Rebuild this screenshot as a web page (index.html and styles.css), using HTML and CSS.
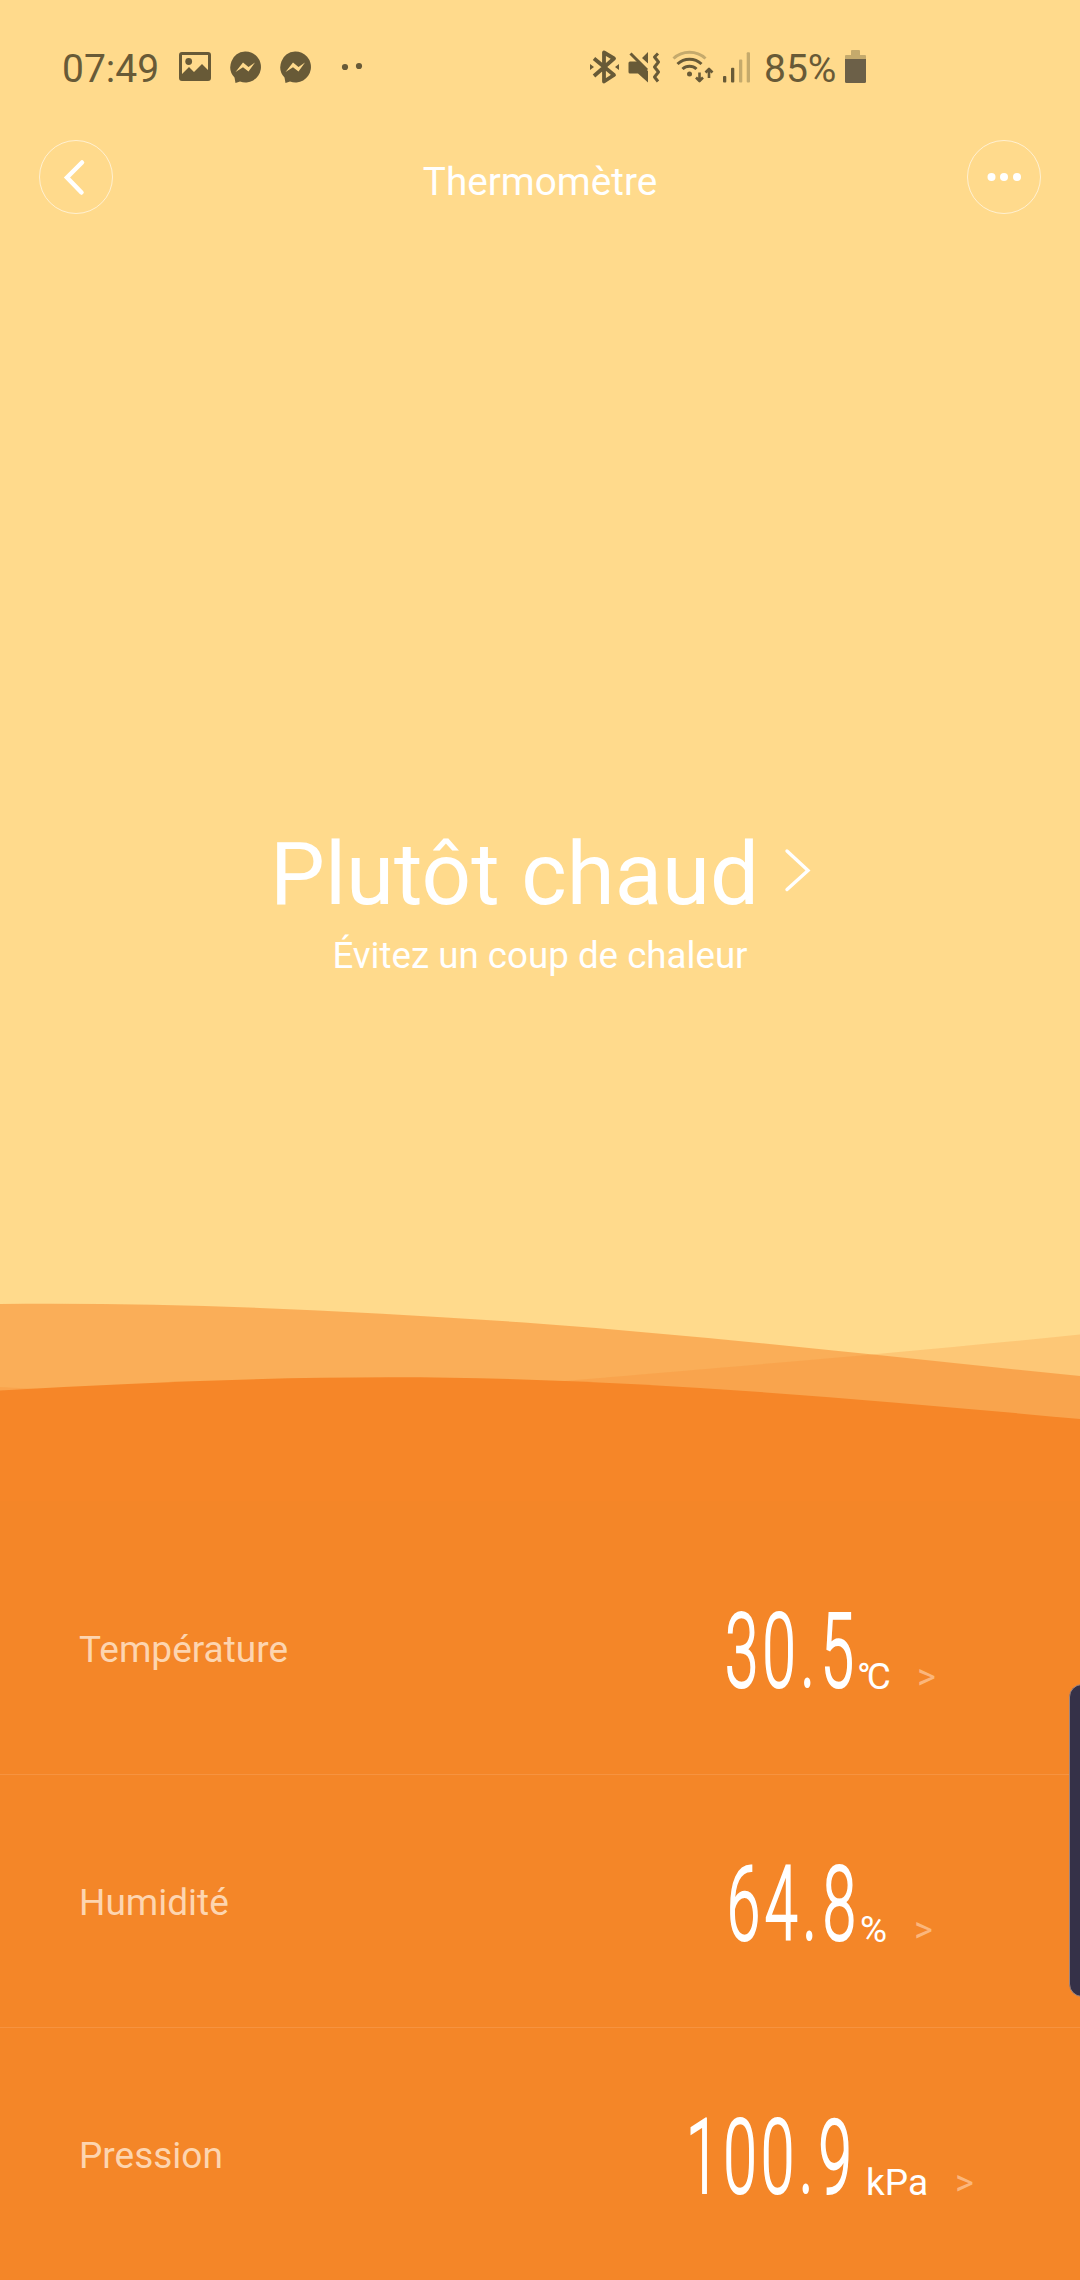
FILE: index.html
```html
<!DOCTYPE html>
<html lang="fr">
<head>
  <meta charset="UTF-8">
  <title>Thermomètre</title>
  <meta name="viewport" content="width=device-width, initial-scale=1.0">
  <link rel="stylesheet" href="styles.css">
</head>
<body>
  <div class="app">
    <div class="status-bar">
      <span class="time">07:49</span>
      <div class="notifications">
        <svg width="32" height="36" viewBox="0 0 32 36">
          <path fill-rule="evenodd" d="M3 4h26a3 3 0 0 1 3 3v23a3 3 0 0 1-3 3H3a3 3 0 0 1-3-3V7a3 3 0 0 1 3-3zM3 7v19l7-7 5 5 8-8 6 6V7z"/>
          <circle cx="9.7" cy="13.5" r="3.4"/>
        </svg>
        <svg width="32" height="36" viewBox="0 0 32 36">
          <path fill-rule="evenodd" d="M16 3.500a15.500 15.500 0 1 1-5 30l-4.500 1.500-1-5.500A15.500 15.500 0 0 1 16 3.500zM6.500 24l7.500-9.500 5.500 4.500 6.500-4.500-6.500 9-5.500-4.200z"/>
        </svg>
        <svg width="32" height="36" viewBox="0 0 32 36">
          <path fill-rule="evenodd" d="M16 3.500a15.500 15.500 0 1 1-5 30l-4.500 1.500-1-5.500A15.500 15.500 0 0 1 16 3.500zM6.500 24l7.500-9.500 5.500 4.500 6.500-4.500-6.500 9-5.500-4.200z"/>
        </svg>
      </div>
      <svg class="more-dots" width="22" height="36" viewBox="0 0 22 36">
        <circle cx="4" cy="19" r="3.100"/>
        <circle cx="18" cy="18" r="3.100"/>
      </svg>
      <div class="system">
        <!-- bluetooth -->
        <svg width="38" height="36" viewBox="0 0 38 36">
          <path class="line" d="M6 28L26 10.500 16 4.500v29L26 27 6 10.500"/>
          <path d="M2 16l4 3-4 3zM31 16l-4 3 4 3z"/>
        </svg>
        <!-- mute -->
        <svg width="43" height="36" viewBox="0 0 43 36">
          <path d="M4 13.500h8l10 9.500v11.500l-10-9H4a1.500 1.500 0 0 1-1.500-1.500v-9A1.500 1.500 0 0 1 4 13.500zM16 10l6-6v11.500z"/>
          <path class="line thin" d="M4.500 5.500L21 22M32 5.500L28.500 9l4 5-4 5 4 5-4 5 3.500 4.500"/>
        </svg>
        <!-- wifi -->
        <svg width="51" height="36" viewBox="0 0 51 36">
          <path class="line thin faded" d="M4.500 10.500a23.500 23.500 0 0 1 32 0"/>
          <path class="line thin" d="M8.500 16a17.500 17.500 0 0 1 24 0M13.500 21a10 10 0 0 1 14 0"/>
          <circle cx="20.500" cy="26" r="2.500"/>
          <path class="line thinner" d="M30.500 24.500v8M27 29.500l3.500 3.500 3.500-3.500M40 30v-8M36.500 24.500L40 21l3.500 3.500"/>
        </svg>
        <!-- signal -->
        <svg width="42" height="36" viewBox="0 0 42 36">
          <rect x="3" y="28" width="3.300" height="6.500" rx="1"/>
          <rect x="11" y="19.700" width="3.300" height="14.800" rx="1"/>
          <rect class="faded-fill" x="19" y="11.500" width="3.300" height="23" rx="1"/>
          <rect class="faded-fill" x="26.700" y="4.300" width="3.300" height="30.200" rx="1"/>
        </svg>
        <span class="battery-level">85%</span>
        <svg width="22" height="36" viewBox="0 0 22 36">
          <path class="faded-fill" d="M6 3a1 1 0 0 1 1-1h7a1 1 0 0 1 1 1v4h5a1 1 0 0 1 1 1v3H0V8a1 1 0 0 1 1-1h5z"/>
          <path class="battery-fill" d="M0 11h21v22.500a1.500 1.500 0 0 1-1.500 1.500h-18A1.500 1.500 0 0 1 0 33.500z"/>
        </svg>
      </div>
    </div>

    <div class="title-bar">
      <div class="round-button">
        <svg width="72" height="72" viewBox="0 0 72 72">
          <path class="back-arrow" d="M42 21.500L27 36.500 41.500 51.500"/>
        </svg>
      </div>
      <div class="title">Thermomètre</div>
      <div class="round-button">
        <svg width="72" height="72" viewBox="0 0 72 72">
          <circle cx="23.500" cy="36" r="4"/>
          <circle cx="36" cy="36" r="4"/>
          <circle cx="49" cy="36" r="4"/>
        </svg>
      </div>
    </div>

    <div class="summary">
      <div class="feeling">
        <span>Plutôt chaud</span>
        <svg width="30" height="48" viewBox="0 0 30 48">
          <path class="feeling-arrow" d="M3 5l21 19.500L3 43.500"/>
        </svg>
      </div>
      <div class="advice">Évitez un coup de chaleur</div>
    </div>

    <svg class="waves" width="1080" height="221" viewBox="0 0 1080 221">
      <path class="wave-back" d="M0 24C180 22 360 31 540 43.700C720 57 900 78 1080 96V221H0z"/>
      <path class="wave-middle" d="M0 107C250 120 400 116 576 100C680 91 900 73 1080 54.500V221H0z"/>
      <path class="wave-front" d="M0 110.500C130 103 260 97.300 390 97.300C620 97.300 850 118 1080 139V221H0z"/>
    </svg>

    <div class="measures">
      <div class="row">
        <div class="label">Température</div>
        <svg class="value" width="176" height="130" viewBox="0 0 176 130">
          <text transform="translate(44 102) scale(0.58 1)" dx="0 7.500 8.500 10">30.5</text>
        </svg>
        <div class="unit degree">°C</div>
        <div class="arrow">&gt;</div>
      </div>
      <div class="row">
        <div class="label">Humidité</div>
        <svg class="value" width="176" height="130" viewBox="0 0 176 130">
          <text transform="translate(46 102) scale(0.58 1)" dx="0 7.500 8.500 10">64.8</text>
        </svg>
        <div class="unit percent">%</div>
        <div class="arrow">&gt;</div>
      </div>
      <div class="row">
        <div class="label">Pression</div>
        <svg class="value" width="176" height="130" viewBox="0 0 176 130">
          <text transform="translate(5 102) scale(0.58 1)" dx="0 7.500 7.500 8.500 9">100.9</text>
        </svg>
        <div class="unit pressure">kPa</div>
        <div class="arrow">&gt;</div>
      </div>
    </div>

    <!-- edge panel handle, lies over the list -->
    <div class="edge-handle"></div>
  </div>
</body>
</html>
```
FILE: styles.css
```css
body {
  margin: 0;
  font-family: Roboto, sans-serif;
  background: #ffda8c;
  color: #fff;
}
svg {
  display: block;
  flex: none;
}
.app {
  position: relative;
  width: 1080px;
  height: 2280px;
  overflow: hidden;
  display: flex;
  flex-direction: column;
}

/* status bar */
.status-bar {
  box-sizing: border-box;
  height: 140px;
  padding: 48px 0 0 62px;
  display: flex;
  align-items: flex-start;
  font-size: 39px;
  line-height: 42px;
  color: #685a37;
  fill: #685a37;
}
.time {
  width: 117px;
}
.notifications {
  display: flex;
  gap: 18px;
}
.more-dots {
  margin-left: 30px;
}
.system {
  margin-left: 225px;
  display: flex;
}
.battery-level {
  width: 81px;
  margin-left: 2px;
}
.battery-fill {
  fill: #6c6048;
}
.line {
  fill: none;
  stroke: #685a37;
  stroke-width: 3.8;
  stroke-linejoin: round;
}
.thin {
  stroke-width: 3;
}
.thinner {
  stroke-width: 2.6;
}
.faded {
  stroke: #c5aa6c;
}
.faded-fill {
  fill: #c5aa6c;
}

/* title bar */
.title-bar {
  height: 74px;
  padding: 0 39px;
  display: flex;
  justify-content: space-between;
}
.round-button {
  width: 72px;
  height: 72px;
  border: 1px solid rgba(255, 255, 255, 0.6);
  border-radius: 50%;
  fill: #fff;
}
.back-arrow, .feeling-arrow {
  fill: none;
  stroke: #fff;
  stroke-width: 4.5;
  stroke-linecap: round;
}
.feeling-arrow {
  stroke-width: 3.4;
}
.title {
  padding-top: 19px;
  font-size: 38.7px;
  line-height: 46px;
}

/* summary */
.summary {
  height: 1066px;
  text-align: center;
}
.feeling {
  display: flex;
  padding: 608px 0 0 270px;
  font-size: 87px;
  line-height: 104px;
}
.feeling svg {
  margin: 24px 0 0 25px;
}
.advice {
  margin-top: 8px;
  font-size: 36.7px;
  line-height: 44px;
}

/* waves */
.waves {
  flex: none;
}
.wave-back {
  fill: #f68628;
  fill-opacity: 0.52;
}
.wave-middle {
  fill: #f68628;
  fill-opacity: 0.22;
}
.wave-front {
  fill: #f68628;
}

/* measures */
.measures {
  height: 779px;
  background: #f48628;
}
.row {
  box-sizing: border-box;
  height: 253px;
  padding-left: 79px;
  display: flex;
  border-bottom: 1px solid #f69340;
}
.row:first-child {
  height: 274px;
  padding-top: 21px;
}
.row:last-child {
  border-bottom: none;
}
.label {
  width: 602px;
  padding-top: 106px;
  font-size: 37px;
  line-height: 44px;
  color: #fdd5b0;
}
.value {
  margin-top: 63px;
  fill: #fff;
  font-size: 103px;
  font-weight: 300;
}
/* keeps the strokes of the narrowed digits even */
.value text {
  stroke: #fff;
  stroke-width: 1.8;
  vector-effect: non-scaling-stroke;
}
.unit {
  width: 30px;
  padding-top: 133px;
  font-size: 37px;
  line-height: 44px;
}
.degree {
  letter-spacing: -4px;
}
.percent {
  padding-left: 3px;
  width: 24px;
}
.pressure {
  padding-left: 9px;
  width: 59px;
}
.arrow {
  margin-left: 30px;
  padding-top: 133px;
  font-size: 36px;
  line-height: 44px;
  color: #fbb67c;
}

.edge-handle {
  position: absolute;
  top: 1684px;
  right: -20px;
  width: 29px;
  height: 311px;
  background: #353148;
  border: 1px solid #9b8583;
  border-radius: 13px;
}
```
